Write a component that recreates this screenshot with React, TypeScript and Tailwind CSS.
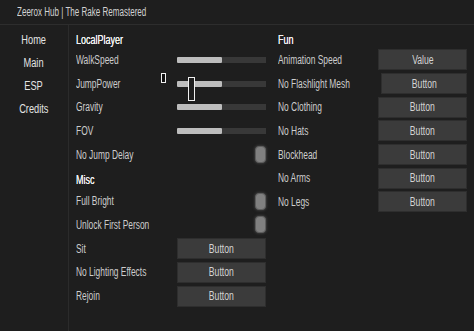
const font = "font-['Liberation_Sans',Arial,sans-serif]";

const sidebarItems = ["Home", "Main", "ESP", "Credits"];

type Row = { label: string; kind: "slider" | "toggle" | "button"; text?: string };

const localPlayer: Row[] = [
  { label: "WalkSpeed", kind: "slider" },
  { label: "JumpPower", kind: "slider" },
  { label: "Gravity", kind: "slider" },
  { label: "FOV", kind: "slider" },
  { label: "No Jump Delay", kind: "toggle" },
];

const misc: Row[] = [
  { label: "Full Bright", kind: "toggle" },
  { label: "Unlock First Person", kind: "toggle" },
  { label: "Sit", kind: "button" },
  { label: "No Lighting Effects", kind: "button" },
  { label: "Rejoin", kind: "button" },
];

const fun: Row[] = [
  { label: "Animation Speed", kind: "button", text: "Value" },
  { label: "No Flashlight Mesh", kind: "button" },
  { label: "No Clothing", kind: "button" },
  { label: "No Hats", kind: "button" },
  { label: "Blockhead", kind: "button" },
  { label: "No Arms", kind: "button" },
  { label: "No Legs", kind: "button" },
];

function Control({ row }: { row: Row }) {
  if (row.kind === "slider") {
    return (
      <div className="w-[89px] h-[6px] flex">
        <div className="w-[45px] h-full bg-[#bdbdbd] rounded-[1px]" />
        <div className="flex-1 h-full bg-[#383838]" />
      </div>
    );
  }
  if (row.kind === "toggle") {
    return (
      <div className="w-[89px] flex justify-end">
        <div className="w-[11px] h-[17px] rounded-[4px] bg-[#808080] border border-[#5e5e5e] shadow-[0_0_3px_#555]" />
      </div>
    );
  }
  return (
    <div className="w-[89px] h-[21px] bg-[#3b3b3b] border border-[#2e2e2e] flex items-center justify-center text-[12px] text-[#d4d4d4]">
      <span className="inline-block scale-x-[0.72]">{row.text ?? "Button"}</span>
    </div>
  );
}

function Rows({ rows }: { rows: Row[] }) {
  return (
    <>
      {rows.map((row) => (
        <div key={row.label} className="h-[23.7px] flex items-center justify-between">
          <span className="inline-block whitespace-nowrap origin-left scale-x-[0.7] text-[12px] text-[#cdcdcd]">
            {row.label}
          </span>
          <Control row={row} />
        </div>
      ))}
    </>
  );
}

function Header({ title, className = "" }: { title: string; className?: string }) {
  return (
    <div className={`flex text-[12.5px] text-[#f0f0f0] ${className}`}>
      <span className="inline-block origin-left scale-x-[0.72] [text-shadow:0_0_0.4px_#fff]">{title}</span>
    </div>
  );
}

export default function App() {
  return (
    <div className={`w-[474px] h-[331px] bg-[#1e1e1e] flex flex-col ${font} relative overflow-hidden`}>
      {/* title bar */}
      <div className="h-[25px] border-b border-[#2d2d2d] flex items-center pl-[17px] pb-[1px] text-[12px] text-[#d2d2d2]">
        <span className="inline-block whitespace-nowrap origin-left scale-x-[0.67]">Zeerox Hub | The Rake Remastered</span>
      </div>

      <div className="flex flex-1">
        {/* sidebar */}
        <div className="w-[69px] border-r border-[#2b2b2b] pt-[4px] flex flex-col">
          {sidebarItems.map((item) => (
            <div key={item} className="h-[23px] flex items-center justify-center text-[12.5px] text-[#e4e4e4]">
              <span className="inline-block scale-x-[0.74]">{item}</span>
            </div>
          ))}
        </div>

        {/* content */}
        <div className="flex gap-[12px] pl-[7px] pt-[7px]">
          <div className="w-[190px] flex flex-col">
            <Header title="LocalPlayer" className="h-[16px] items-center" />
            <Rows rows={localPlayer} />
            <Header title="Misc" className="h-[23px] items-end" />
            <Rows rows={misc} />
          </div>
          <div className="w-[189px] flex flex-col">
            <Header title="Fun" className="h-[16px] items-center" />
            <Rows rows={fun} />
          </div>
        </div>
      </div>

      {/* stray selection outlines over the sliders */}
      <div className="absolute left-[161px] top-[73px] w-[5px] h-[10px] border border-[#f0f0f0] bg-[#111]" />
      <div className="absolute left-[188px] top-[77px] w-[7px] h-[24px] border border-[#f0f0f0] bg-[#1e1e1e]" />
    </div>
  );
}
